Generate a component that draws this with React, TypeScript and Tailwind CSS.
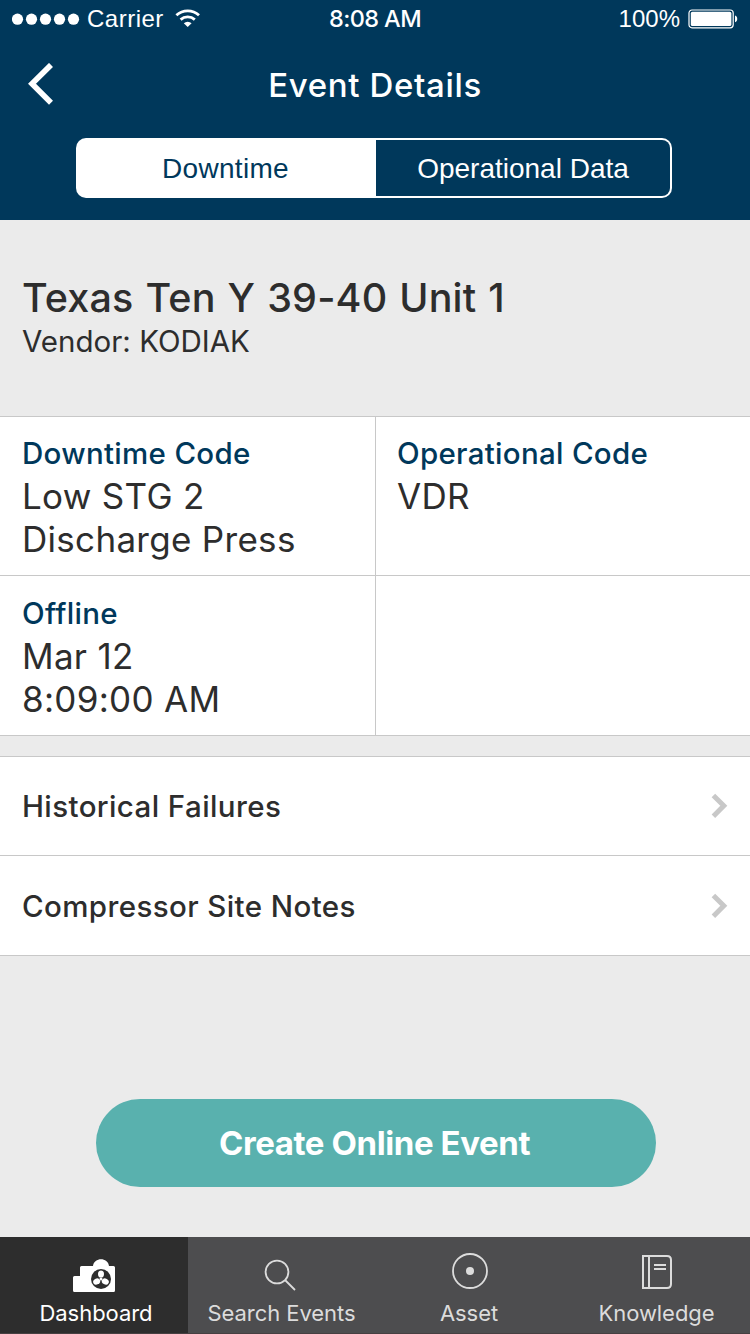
import type { ReactNode } from 'react';

function StatusBar() {
  return (
    <div className="grid h-[38px] grid-cols-3 items-center pr-3 pl-3 font-['Liberation_Sans',sans-serif] text-[24px] leading-[38px]">
      <div className="flex items-center">
        <svg width="68" height="12" viewBox="0 0 68 12" fill="white">
          <circle cx="5.5" cy="6.2" r="5.6" />
          <circle cx="19.5" cy="6.2" r="5.6" />
          <circle cx="33.5" cy="6.2" r="5.6" />
          <circle cx="47.5" cy="6.2" r="5.6" />
          <circle cx="61.5" cy="6.2" r="5.6" />
        </svg>
        <span className="ml-[7px] tracking-[0.5px]">Carrier</span>
        <svg className="mb-[2px] ml-[11px]" width="26" height="18" viewBox="0 0 26 18" fill="none" stroke="white">
          <path d="M1.4 6.3 A16.5 16.5 0 0 1 24 6.3" strokeWidth="2.8" />
          <path d="M5.6 10.6 A10.6 10.6 0 0 1 19.8 10.6" strokeWidth="2.8" />
          <path d="M8.8 14.2 A5.8 5.8 0 0 1 16.6 14.2 L12.7 18 Z" fill="white" stroke="none" />
        </svg>
      </div>
      <div className="text-center font-['Inter',sans-serif] text-[23.5px] font-medium tracking-[-0.6px]">8:08 AM</div>
      <div className="flex items-center justify-end">
        <span>100%</span>
        <svg className="ml-2" width="50" height="20" viewBox="0 0 50 20">
          <rect x="1" y="1" width="44.2" height="17.8" rx="3" fill="none" stroke="white" strokeWidth="1.2" />
          <rect x="2.8" y="2.8" width="40.6" height="14.2" rx="1.6" fill="white" />
          <path d="M47 6.4 C50 7.4 50 12.2 47 13.2 Z" fill="white" />
        </svg>
      </div>
    </div>
  );
}

function Cell({ label, children }: { label?: string; children?: ReactNode }) {
  return (
    <div className="pl-[22px] text-[35px] leading-[43px] font-normal tracking-[0.3px] text-[#2d2d2d]">
      {label && <div className="text-[29.5px] font-medium tracking-[0.3px] text-[#00385b]">{label}</div>}
      {children}
    </div>
  );
}

function ListRow({ label }: { label: string }) {
  return (
    <div className="flex items-center justify-between border-t border-[#c8c8c8] bg-white pr-[22px] pl-[22px] text-[29.5px] font-medium tracking-[0.4px] text-[#2d2d2d]">
      <span className="pt-[1px]">{label}</span>
      <svg width="17" height="26" viewBox="0 0 17 26" fill="none" stroke="#c8c8c8" strokeWidth="5">
        <path d="M2.4 2.4 L12.8 12.8 L2.4 23.2" />
      </svg>
    </div>
  );
}

function Tab({ label, active, children }: { label: string; active?: boolean; children: ReactNode }) {
  return (
    <div
      className={
        active
          ? 'flex flex-col items-center bg-[#2d2d2d] pl-1 text-white'
          : 'flex flex-col items-center text-[#dcdcdc]'
      }
    >
      <div className="flex h-[62px] items-center">{children}</div>
      <span className="text-[22px] leading-[28px] font-normal tracking-[-0.05px]">{label}</span>
    </div>
  );
}

export default function App() {
  return (
    <div className="flex h-[1334px] w-[750px] flex-col bg-[#ebebeb] font-['Inter',sans-serif]">
      <header className="h-[220px] bg-[#00385b] text-white">
        <StatusBar />
        <div className="grid h-[94px] grid-cols-[100px_1fr_100px] items-center">
          <svg className="mb-[2px] ml-[28px]" width="26" height="42" viewBox="0 0 26 42" fill="none" stroke="white" strokeWidth="5.6">
            <path d="M23 1.9 L4 20.8 L23 39.7" />
          </svg>
          <h1 className="pt-[2px] text-center text-[33px] font-medium tracking-[0.65px]">Event Details</h1>
        </div>
        <div className="mt-[6px] ml-[76px] flex h-[60px] w-[596px] font-['Liberation_Sans',sans-serif] text-[28px]">
          <div className="w-[300px] rounded-l-[10px] bg-white pr-[1px] text-center leading-[61px] tracking-[0.3px] text-[#00385b]">
            Downtime
          </div>
          <div className="flex-1 rounded-r-[10px] border-y-2 border-r-2 border-white text-center leading-[57px]">
            Operational Data
          </div>
        </div>
      </header>

      <section className="h-[196px] pt-[56px] pl-[22px] leading-[44px] text-[#2d2d2d]">
        <h2 className="text-[39.5px] font-medium tracking-[0.15px] [word-spacing:1.3px]">Texas Ten Y 39-40 Unit 1</h2>
        <p className="-mt-px text-[29.5px] font-normal">Vendor: KODIAK</p>
      </section>

      <section className="bg-white">
        <div className="grid h-[159px] grid-cols-2 border-t border-[#c8c8c8] *:pt-[15px]">
          <Cell label="Downtime Code">
            Low STG 2<br />
            Discharge Press
          </Cell>
          <div className="border-l border-[#c8c8c8] *:-ml-px">
            <Cell label="Operational Code">VDR</Cell>
          </div>
        </div>
        <div className="grid h-[161px] grid-cols-2 border-y border-[#c8c8c8] *:pt-[16px]">
          <Cell label="Offline">
            Mar 12
            <br />
            8:09:00 AM
          </Cell>
          <div className="border-l border-[#c8c8c8]" />
        </div>
      </section>

      <section className="mt-5 grid h-[200px] grid-rows-[99px_100px] border-b border-[#c8c8c8]">
        <ListRow label="Historical Failures" />
        <ListRow label="Compressor Site Notes" />
      </section>

      <button className="mt-[143px] ml-[96px] h-[88px] w-[560px] rounded-full bg-[#59b1ae] pr-[3px] text-[33px] leading-[88px] font-bold tracking-[-0.4px] text-white">
        Create Online Event
      </button>

      <nav className="mt-auto grid h-[97px] grid-cols-[188px_187px_188px_187px] border-b border-[#463f41] bg-[#4d4d4f]">
        <Tab label="Dashboard" active>
          <svg className="mt-[16px] mr-[4px]" width="42" height="34" viewBox="0 0 42 34" fill="white">
            <path d="M0 18.5 Q0 17 1.5 17 H7 V8.5 Q7 7 8.5 7 H20 C21 -2 35 -2 36 7 H40.5 Q42 7 42 8.5 V31.5 Q42 33 40.5 33 H1.5 Q0 33 0 31.5 Z" />
            <circle cx="28" cy="20" r="10" fill="#2d2d2d" />
            <ellipse cx="28" cy="15" rx="3" ry="3.6" />
            <ellipse cx="28" cy="15" rx="3" ry="3.6" transform="rotate(120 28 20)" />
            <ellipse cx="28" cy="15" rx="3" ry="3.6" transform="rotate(240 28 20)" />
            <circle cx="28" cy="20" r="1.5" />
          </svg>
        </Tab>
        <Tab label="Search Events">
          <svg className="mt-[14px] mr-[3px]" width="32" height="32" viewBox="0 0 32 32" fill="none" stroke="#dcdcdc" strokeWidth="1.8">
            <circle cx="13" cy="13" r="11.4" />
            <path d="M21 21 L31 31" />
          </svg>
        </Tab>
        <Tab label="Asset">
          <svg className="mt-[6px] ml-[2px]" width="36" height="36" viewBox="0 0 36 36" fill="none" stroke="#dcdcdc" strokeWidth="1.8">
            <circle cx="18" cy="18" r="17" />
            <circle cx="18" cy="18" r="4" fill="#dcdcdc" stroke="none" />
          </svg>
        </Tab>
        <Tab label="Knowledge">
          <svg className="mt-[8px] ml-[1px]" width="30" height="34" viewBox="0 0 30 34" fill="none" stroke="#dcdcdc" strokeWidth="2">
            <path d="M1 1 H25 Q29 1 29 5 V29 Q29 33 25 33 H1 Z M7 1 V33 M12 10 H24 M12 14 H24" />
          </svg>
        </Tab>
      </nav>
    </div>
  );
}
